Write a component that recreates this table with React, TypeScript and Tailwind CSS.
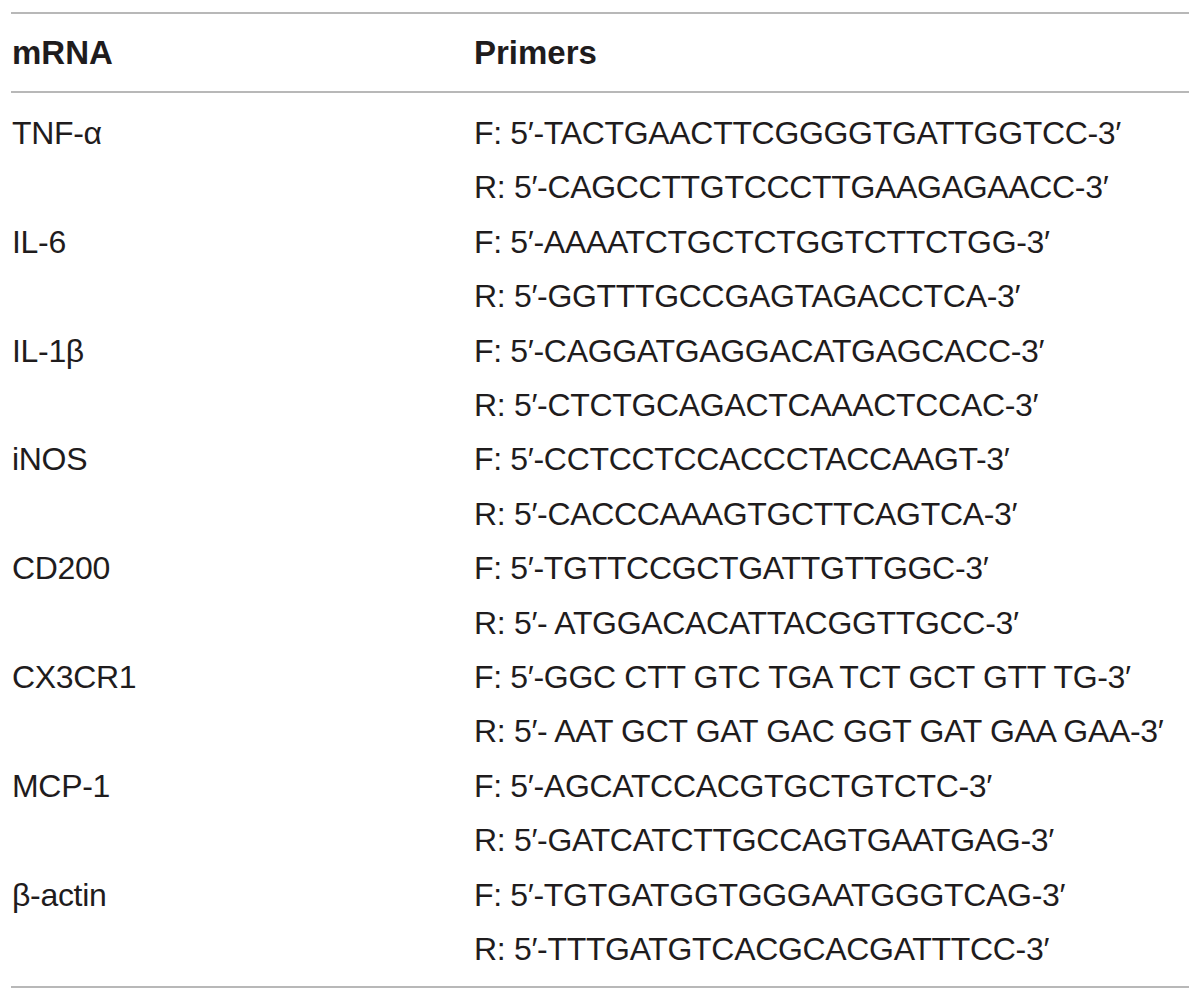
const rows: { gene: string; f: string; r: string }[] = [
  { gene: 'TNF-α', f: 'F: 5′-TACTGAACTTCGGGGTGATTGGTCC-3′', r: 'R: 5′-CAGCCTTGTCCCTTGAAGAGAACC-3′' },
  { gene: 'IL-6', f: 'F: 5′-AAAATCTGCTCTGGTCTTCTGG-3′', r: 'R: 5′-GGTTTGCCGAGTAGACCTCA-3′' },
  { gene: 'IL-1β', f: 'F: 5′-CAGGATGAGGACATGAGCACC-3′', r: 'R: 5′-CTCTGCAGACTCAAACTCCAC-3′' },
  { gene: 'iNOS', f: 'F: 5′-CCTCCTCCACCCTACCAAGT-3′', r: 'R: 5′-CACCCAAAGTGCTTCAGTCA-3′' },
  { gene: 'CD200', f: 'F: 5′-TGTTCCGCTGATTGTTGGC-3′', r: 'R: 5′- ATGGACACATTACGGTTGCC-3′' },
  { gene: 'CX3CR1', f: 'F: 5′-GGC CTT GTC TGA TCT GCT GTT TG-3′', r: 'R: 5′- AAT GCT GAT GAC GGT GAT GAA GAA-3′' },
  { gene: 'MCP-1', f: 'F: 5′-AGCATCCACGTGCTGTCTC-3′', r: 'R: 5′-GATCATCTTGCCAGTGAATGAG-3′' },
  { gene: 'β-actin', f: 'F: 5′-TGTGATGGTGGGAATGGGTCAG-3′', r: 'R: 5′-TTTGATGTCACGCACGATTTCC-3′' },
];

export default function App() {
  return (
    <div className="min-h-[999px] bg-white px-[11px] pt-[12px] font-['Liberation_Sans',Arial,sans-serif] text-[#1f1c1d]">
      <div className="border-t-2 border-b-2 border-[#b8b8b8]">
        {/* header */}
        <div className="grid h-[79px] grid-cols-[463px_1fr] items-center border-b-2 border-[#b8b8b8] text-[33px] font-bold">
          <div className="pl-[1px]">mRNA</div>
          <div>Primers</div>
        </div>

        {/* body */}
        <div className="pt-[13px] pb-[9px] text-[32px] leading-[54.4px] tracking-[-0.01em]">
          {rows.map((row) => (
            <div key={row.gene} className="grid grid-cols-[463px_1fr]">
              <div className="pl-[1px]">{row.gene}</div>
              <div className="flex flex-col">
                <span>{row.f}</span>
                <span>{row.r}</span>
              </div>
            </div>
          ))}
        </div>
      </div>
    </div>
  );
}
